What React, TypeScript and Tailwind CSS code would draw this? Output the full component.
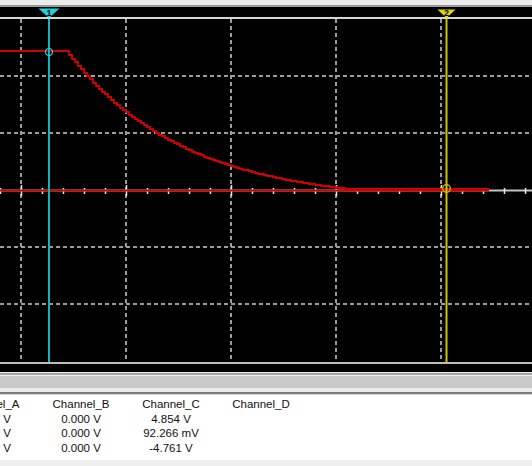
import React from 'react';

const GRID_X = [21, 126, 231, 336, 441];
const GRID_Y = [76, 133, 247, 304];
const TICKS = Array.from({ length: 26 }, (_, i) => i * 21);

// decaying trace, stair-stepped like the sampled data; settles at x≈360
function tracePath() {
  const k = 115;
  const T = 291;
  const floor = Math.exp(-T / k);
  let d = 'M0 51 H69';
  let y = 51;
  for (let x = 69; x < 489; x += 3) {
    const t = Math.min(T, x + 3 - 69);
    const f = (Math.exp(-t / k) - floor) / (1 - floor);
    const ny = Math.min(189, Math.round(190 - 139 * f));
    d += ` V${ny} H${Math.min(489, x + 3)}`;
    y = ny;
  }
  return d + ` V${y}`;
}

const rows = [
  ['0.000 V', '0.000 V', '4.854 V', ''],
  ['0.000 V', '0.000 V', '92.266 mV', ''],
  ['0.000 V', '0.000 V', '-4.761 V', ''],
];

function Scope() {
  return (
    <svg width={532} height={365} viewBox="0 7 532 365" className="block shrink-0">
      <rect x={0} y={7} width={532} height={365} fill="#000" />
      <rect x={0} y={17} width={532} height={2} fill="#d6d6d6" />
      <rect x={0} y={362} width={532} height={2} fill="#bcbcbc" />

      {GRID_X.map((x) => (
        <line key={x} x1={x} y1={19} x2={x} y2={362} stroke="#9c9c9c" strokeWidth={2} strokeDasharray="4 3" />
      ))}
      {GRID_Y.map((y) => (
        <line key={y} x1={0} y1={y} x2={532} y2={y} stroke="#9c9c9c" strokeWidth={2} strokeDasharray="4 3" />
      ))}

      <line x1={0} y1={190.5} x2={532} y2={190.5} stroke="#c4c4c4" strokeWidth={2} />
      {TICKS.map((x) => {
        const major = (x - 21) % 105 === 0;
        return (
          <line
            key={x}
            x1={x + 0.5}
            x2={x + 0.5}
            y1={major ? 185 : 188}
            y2={major ? 196 : 194}
            stroke="#e8e8e8"
            strokeWidth={1.5}
          />
        );
      })}

      <line x1={0} y1={190.5} x2={489} y2={190.5} stroke="#c80000" strokeWidth={2} />
      <path d={tracePath()} fill="none" stroke="#d40000" strokeWidth={1.8} />

      {/* cursor 1 */}
      <line x1={49} y1={19} x2={49} y2={362} stroke="#14b4bc" strokeWidth={2} />
      <polygon points="38.5,8.5 59.5,8.5 49,18" fill="#1ed2de" />
      <text x={49} y={16} textAnchor="middle" fontSize={9} fontWeight={700} fill="#000" fontFamily="Liberation Sans, sans-serif">1</text>
      <circle cx={49} cy={52} r={3.5} fill="none" stroke="#1ed2de" strokeWidth={1.2} />

      {/* cursor 2 */}
      <line x1={446.5} y1={19} x2={446.5} y2={362} stroke="#c8c400" strokeWidth={2} />
      <polygon points="437.5,9.5 455.5,9.5 446.5,18" fill="#e0dc00" />
      <text x={446.5} y={16} textAnchor="middle" fontSize={9} fontWeight={700} fill="#000" fontFamily="Liberation Sans, sans-serif">2</text>
      <circle cx={446.5} cy={188.5} r={3.8} fill="none" stroke="#b8c800" strokeWidth={1.3} />
    </svg>
  );
}

export default function App() {
  return (
    <div className="w-[532px] h-[466px] overflow-hidden bg-white flex flex-col" style={{ fontFamily: '"Liberation Sans", Arial, sans-serif' }}>
      <div className="h-[5px] bg-[#ececec] shrink-0" />
      <div className="h-[2px] bg-[#9a9a9a] shrink-0" />
      <Scope />

      {/* splitter between plot and readout */}
      <div className="h-px bg-[#e6e6e6] shrink-0" />
      <div className="h-[2px] bg-[#a6a6a6] shrink-0" />
      <div className="h-px bg-[#f0f0f0] shrink-0" />
      <div className="h-[12px] bg-[#c9c9c9] shrink-0" />
      <div className="h-[4px] bg-[#ebebeb] shrink-0" />
      <div className="h-[2px] bg-[#7c7c7c] shrink-0" />
      <div className="h-px bg-[#d4d4d4] shrink-0" />

      {/* cursor readout table, scrolled so the first column is clipped */}
      <div className="h-[65px] shrink-0 bg-white pt-[2px] text-[11.5px] leading-[14.6px] text-[#111] overflow-hidden">
        <div className="flex -ml-[54px]">
          {['Channel_A', 'Channel_B', 'Channel_C', 'Channel_D'].map((h) => (
            <div key={h} className="w-[90px] shrink-0 text-center whitespace-nowrap">{h}</div>
          ))}
        </div>
        {rows.map((r, i) => (
          <div key={i} className="flex -ml-[54px]">
            {r.map((v, j) => (
              <div key={j} className="w-[90px] shrink-0 text-center whitespace-nowrap">{v}</div>
            ))}
          </div>
        ))}
      </div>
      <div className="flex-1 bg-[#efefef]" />
    </div>
  );
}
